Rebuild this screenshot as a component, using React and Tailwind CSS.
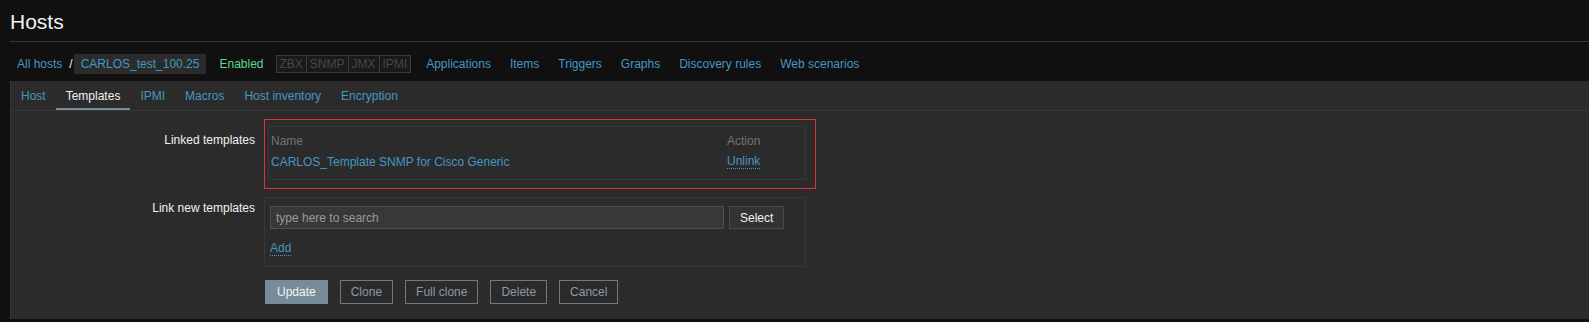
export default function App() {
  const navLinks = ["Applications", "Items", "Triggers", "Graphs", "Discovery rules", "Web scenarios"];
  const tabs = ["Host", "Templates", "IPMI", "Macros", "Host inventory", "Encryption"];
  const status = ["ZBX", "SNMP", "JMX", "IPMI"];
  const altButtons = ["Clone", "Full clone", "Delete", "Cancel"];
  return (
    <div className="min-h-[322px] bg-[#101010] font-['Liberation_Sans',Arial,sans-serif] text-[12px] leading-[14px] text-[#f2f2f2]">
      <div className="ml-[10px] h-[42px] border-b border-[#383838] pt-[9px]">
        <h1 className="text-[21px] leading-[25px] font-normal">Hosts</h1>
      </div>
      <div className="h-[39px] pt-[4px] pl-[17px] flex items-center">
        <span className="text-[#4796c4]">All hosts</span>
        <span className="ml-[7px] mr-[1px] text-[#f2f2f2]">/</span>
        <span className="h-[20px] px-[7px] flex items-center bg-[#2b2b2b] text-[#4796c4]">CARLOS_test_100.25</span>
        <span className="ml-[13px] text-[#59db8f]">Enabled</span>
        <div className="ml-[12px] flex h-[18px] border border-[#3a3a3a] bg-[#1a1a1a]">
          {status.map((s, i) => (
            <span key={s} className={"px-[3px] flex items-center text-[#474747] " + (i > 0 ? "border-l border-[#3a3a3a]" : "")}>{s}</span>
          ))}
        </div>
        <div className="ml-[15px] flex gap-[19px]">
          {navLinks.map((l) => (
            <span key={l} className="text-[#4796c4]">{l}</span>
          ))}
        </div>
      </div>
      <div className="ml-[10px] bg-[#2b2b2b] border-l border-[#383838] pb-[15px]">
        <div className="h-[30px] border-b border-[#383838] flex">
          {tabs.map((t) => (
            <div
              key={t}
              className={
                "h-full px-[10px] flex items-center " +
                (t === "Templates" ? "border-b-2 border-[#768d99] text-[#f2f2f2] pt-[2px]" : "text-[#4796c4]")
              }
            >
              {t}
            </div>
          ))}
        </div>
        <div className="pt-[8px]">
          <div className="flex">
            <div className="w-[253px] pr-[9px] pt-[14px] text-right">Linked templates</div>
            <div className="relative pt-[7px] pb-[9px] pl-[4px] pr-[10px]">
              <div className="absolute inset-0 border border-[#d8333f] pointer-events-none"></div>
              <div className="w-[538px] border border-[#383838] pt-[4px] pl-[2px] pb-[6px]">
                <div className="grid grid-cols-[456px_1fr]">
                  <div className="h-[20px] flex items-center text-[#737373]">Name</div>
                  <div className="h-[20px] flex items-center text-[#737373]">Action</div>
                  <div className="h-[22px] flex items-center text-[#4796c4]">CARLOS_Template SNMP for Cisco Generic</div>
                  <div className="h-[22px] flex items-center">
                    <span className="text-[#4796c4] border-b border-dotted border-[#4796c4] leading-[13px]">Unlink</span>
                  </div>
                </div>
              </div>
            </div>
          </div>
          <div className="flex mt-[8px]">
            <div className="w-[253px] pr-[9px] pt-[4px] text-right">Link new templates</div>
            <div className="w-[542px] border border-[#383838] pt-[8px] pb-[8px] px-[5px]">
              <div className="flex gap-[5px]">
                <div className="w-[454px] h-[23px] bg-[#383838] border border-[#4f4f4f] flex items-center px-[5px] text-[#9a9a9a]">type here to search</div>
                <div className="h-[23px] px-[10px] bg-[#333333] border border-[#4a4a4a] flex items-center text-[#f2f2f2]">Select</div>
              </div>
              <div className="mt-[11px] h-[18px] flex items-center">
                <span className="text-[#4796c4] border-b border-dotted border-[#4796c4] leading-[13px]">Add</span>
              </div>
            </div>
          </div>
          <div className="mt-[13px] pl-[254px] flex gap-[12px]">
            <div className="h-[24px] px-[11px] bg-[#768d99] border border-[#768d99] flex items-center text-[#f2f2f2]">Update</div>
            {altButtons.map((b) => (
              <div key={b} className="h-[24px] px-[10px] border border-[#6f7a80] flex items-center text-[#8a9aa3]">{b}</div>
            ))}
          </div>
        </div>
      </div>
    </div>
  );
}
